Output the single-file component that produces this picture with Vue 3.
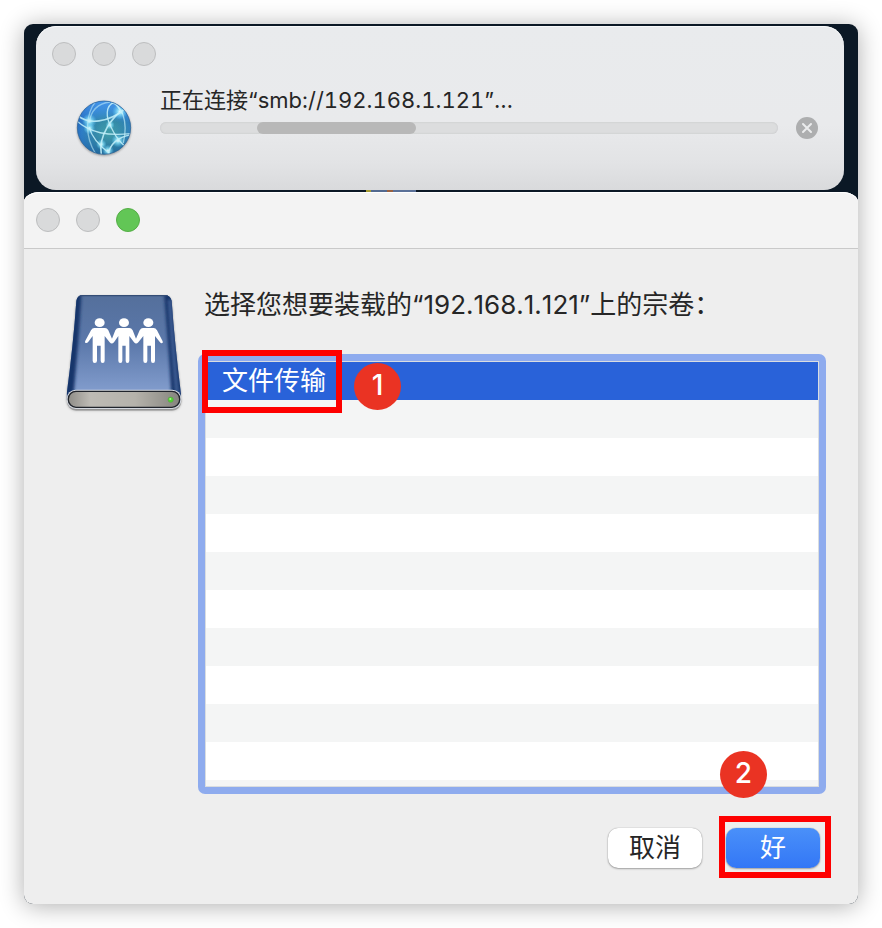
<script setup>
import { ref } from 'vue'

const server = '192.168.1.121'
const volumes = ['文件传输']
const selected = ref(0)

// Empty striped rows below the volumes
const emptyRows = 11

// Indeterminate bar position
const chunk = { marginLeft: '15.7%', width: '25.7%' }
</script>

<template>
  <main class="page">
    <div class="desktop">
      <section class="connect" aria-label="连接">
        <div class="lights">
          <button class="light" type="button" aria-label="关闭" disabled></button>
          <button class="light" type="button" aria-label="最小化" disabled></button>
          <button class="light" type="button" aria-label="缩放" disabled></button>
        </div>
        <div class="connect-body">
          <svg class="globe" viewBox="48 45 168 168" aria-hidden="true">
            <defs>
              <radialGradient id="sea" cx="0.58" cy="0.62" r="0.62">
                <stop offset="0" stop-color="#43a3a4" />
                <stop offset="0.45" stop-color="#3389a8" />
                <stop offset="0.8" stop-color="#2c7cc4" />
                <stop offset="1" stop-color="#2467bd" />
              </radialGradient>
              <linearGradient id="shine" x1="0" y1="0" x2="0" y2="1">
                <stop offset="0" stop-color="#4ba0f5" stop-opacity="0.8" />
                <stop offset="0.4" stop-color="#4ba0f5" stop-opacity="0" />
                <stop offset="1" stop-color="#0a3f70" stop-opacity="0.4" />
              </linearGradient>
              <radialGradient id="glow">
                <stop offset="0" stop-color="#fff" />
                <stop offset="0.3" stop-color="#9ff0ff" stop-opacity="0.8" />
                <stop offset="1" stop-color="#5fd0ff" stop-opacity="0" />
              </radialGradient>
              <clipPath id="disc"><circle cx="132" cy="128" r="80" /></clipPath>
            </defs>
            <circle cx="132" cy="128" r="80" fill="url(#sea)" />
            <circle cx="132" cy="128" r="80" fill="url(#shine)" />
            <g clip-path="url(#disc)">
              <g fill="url(#glow)">
                <circle cx="88" cy="108" r="22" />
                <circle cx="88" cy="130" r="18" />
                <circle cx="180" cy="80" r="24" />
                <circle cx="150" cy="120" r="14" />
                <circle cx="174" cy="167" r="20" />
                <circle cx="124" cy="178" r="16" />
                <circle cx="144" cy="197" r="18" />
              </g>
              <g fill="none" stroke="#c4f1fa" stroke-width="4" stroke-opacity="0.85">
                <path d="M54 92C85 120 145 112 192 74" stroke-width="5" />
                <path d="M48 106C90 145 145 153 214 146" />
                <path d="M108 48C78 85 72 150 106 205" stroke-opacity="0.55" />
                <path d="M88 112C92 82 110 56 150 51" stroke-opacity="0.55" />
                <path d="M88 128C96 160 120 184 150 206" />
                <path d="M186 78C160 94 114 150 124 208" stroke-width="5" />
                <path d="M162 52C135 62 139 98 151 122S168 158 194 184" />
                <path d="M154 52C184 62 206 105 190 174" stroke-opacity="0.65" />
                <path d="M214 149C174 156 150 174 144 210" stroke-width="5" />
                <path d="M162 52C177 62 176 74 188 86" />
              </g>
            </g>
            <circle cx="132" cy="128" r="80" fill="none" stroke="#245f96" stroke-width="2" />
          </svg>
          <div class="connect-main">
            <p id="status" class="status">正在连接“smb://{{ server }}”…</p>
            <div class="progress-row">
              <div class="track" role="progressbar" aria-labelledby="status">
                <div class="chunk" :style="chunk"></div>
              </div>
              <button class="stop" type="button" aria-label="停止">
                <svg viewBox="0 0 22 22" aria-hidden="true">
                  <path d="M7 7l8 8M15 7l-8 8" stroke="#ebeced" stroke-width="2" stroke-linecap="round" />
                </svg>
              </button>
            </div>
          </div>
        </div>
      </section>

      <div class="seam"></div>

      <section class="dialog" aria-labelledby="prompt">
        <header class="titlebar lights">
          <button class="light" type="button" aria-label="关闭" disabled></button>
          <button class="light" type="button" aria-label="最小化" disabled></button>
          <button class="light is-green" type="button" aria-label="缩放"></button>
        </header>
        <div class="dialog-body">
          <svg class="drive" viewBox="33 39 348 357" aria-hidden="true">
            <defs>
              <linearGradient id="top" x1="0" y1="0" x2="0" y2="1">
                <stop offset="0" stop-color="#546f9b" />
                <stop offset="0.45" stop-color="#5b78aa" />
                <stop offset="1" stop-color="#8ba5d5" />
              </linearGradient>
              <linearGradient id="metal" x1="0" y1="0" x2="1" y2="0">
                <stop offset="0" stop-color="#8f8d88" />
                <stop offset="0.2" stop-color="#bebbb5" />
                <stop offset="0.6" stop-color="#b5b2ab" />
                <stop offset="1" stop-color="#85847e" />
              </linearGradient>
              <filter id="soft" x="-50%" y="-10%" width="200%" height="120%">
                <feGaussianBlur stdDeviation="4" />
              </filter>
              <clipPath id="case">
                <path d="M84 45H328Q346 45 350 62C356 150 366 245 378 342V360H35V342C48 245 58 150 64 62Q67 45 84 45Z" />
              </clipPath>
            </defs>
            <rect x="36" y="336" width="343" height="56" rx="27" fill="#000" fill-opacity="0.2" />
            <g clip-path="url(#case)">
              <rect x="33" y="39" width="348" height="330" fill="url(#top)" />
              <!-- rounded edges of the case -->
              <g filter="url(#soft)">
                <path d="M60 30H80C74 150 64 250 54 370H20Z" fill="#19366a" />
                <path d="M326 30H360L390 370H350C344 250 336 150 326 30Z" fill="#17346a" />
                <path d="M344 60C350 160 358 250 367 350" fill="none" stroke="#42639b" stroke-width="8" />
              </g>
              <path d="M60 47H350" stroke="#344d76" stroke-width="4" />
            </g>
            <rect x="35" y="329" width="344" height="58" rx="27" fill="#d4d8df" />
            <rect x="40" y="334" width="334" height="48" rx="23" fill="url(#metal)" stroke="#20242c" stroke-width="4" />
            <circle cx="347" cy="359" r="8" fill="#4fd52f" stroke="#60994f" stroke-width="2" />
            <circle cx="346" cy="357" r="3" fill="#a6f88b" />
            <!-- three people holding hands -->
            <g fill="#fff">
              <ellipse cx="134" cy="128" rx="15" ry="13" />
              <ellipse cx="207" cy="128" rx="15" ry="13" />
              <ellipse cx="280" cy="128" rx="15" ry="13" />
              <path d="M118 144H150Q156 144 160 151L171 176L181 151Q185 144 191 144H223Q229 144 233 151L243 176L254 151Q258 144 264 144H296Q302 144 306 151L323 184Q325 190 320 190Q317 190 315 187L300 168V242Q300 249 294 249Q288 249 288 242V197H277V242Q277 249 271 249Q265 249 265 242V168L250 187Q243 194 237 187L223 168V242Q223 249 217 249Q212 249 212 242V197H202V242Q202 249 196 249Q190 249 190 242V168L177 187Q170 194 164 187L149 168V242Q149 249 143 249Q137 249 137 242V197H126V242Q126 249 119 249Q113 249 113 242V168L99 187Q96 190 92 189Q88 187 91 182L108 151Q112 144 118 144Z" />
            </g>
          </svg>

          <div class="picker">
            <p id="prompt" class="prompt">选择您想要装载的“{{ server }}”上的宗卷：</p>
            <div class="list-wrap">
              <ul class="list" role="listbox" aria-labelledby="prompt" tabindex="0">
                <li
                  v-for="(name, index) in volumes"
                  :key="name"
                  class="row"
                  :class="{ 'is-selected': selected === index }"
                  role="option"
                  :aria-selected="selected === index"
                  @click="selected = index"
                >
                  {{ name }}
                </li>
                <li v-for="n in emptyRows" :key="n" class="row" role="presentation"></li>
              </ul>
              <span class="frame frame-volume"></span>
              <span class="badge badge-volume">1</span>
            </div>
            <div class="actions">
              <button class="btn" type="button">取消</button>
              <div class="confirm">
                <button class="btn is-primary" type="button">好</button>
                <span class="frame frame-confirm"></span>
                <span class="badge badge-confirm">2</span>
              </div>
            </div>
          </div>
        </div>
      </section>
    </div>
  </main>
</template>

<style>
body {
  background: #fff;
}
</style>

<style scoped>
.page {
  padding: 24px;
  font-family: Inter, 'Noto Sans CJK SC', sans-serif;
  color: #262626;
}

.page * {
  box-sizing: border-box;
}

button {
  padding: 0;
  border: 0;
  font-family: inherit;
}

p,
ul {
  margin: 0;
}

.desktop {
  overflow: hidden;
  padding-top: 2px;
  border-radius: 9px;
  background: #0b1825;
  box-shadow: 0 2px 24px rgba(0, 0, 0, 0.32);
}

/* Connection window */
.connect {
  margin: 0 14px 0 12px;
  padding: 16px 26px 34px 16px;
  border-radius: 20px;
  background: linear-gradient(#e9ebed 0%, #e9eaec 60%, #e2e3e5 84%, #d9dadc 100%);
  box-shadow: inset 0 1px 0 #f8f9fa;
}

.lights {
  display: flex;
  gap: 16px;
}

.light {
  width: 24px;
  height: 24px;
  border: 1px solid #bdbebf;
  border-radius: 50%;
  background: #d9dadb;
}

.light.is-green {
  border-color: #55ae46;
  background: #62c656;
}

.connect-body {
  display: flex;
  gap: 28px;
  padding: 20px 0 0 24px;
}

.globe {
  flex: none;
  width: 56px;
  height: 56px;
  margin-top: 14px;
  filter: drop-shadow(0 1px 1px rgba(0, 0, 0, 0.35));
}

.connect-main {
  flex: 1;
}

.status {
  font-size: 22px;
  font-variant-numeric: tabular-nums;
  font-kerning: none;
  line-height: 28px;
}

.progress-row {
  display: flex;
  align-items: center;
  gap: 18px;
  padding-top: 3px;
}

.track {
  flex: 1;
  height: 12px;
  overflow: hidden;
  border-radius: 6px;
  background: #dcddde;
  box-shadow: inset 0 0 2px #bfc0c2;
}

.chunk {
  height: 12px;
  border-radius: 6px;
  background: #b8b8b8;
}

.stop {
  width: 22px;
  height: 22px;
  border-radius: 50%;
  background: #adaeaf;
}

.stop svg {
  display: block;
}

/* Sliver of desktop between both windows */
.seam {
  width: 50px;
  height: 2px;
  margin-left: 41%;
  background: linear-gradient(90deg, #a59b32 10%, #52698f 10% 42%, #98603f 42% 54%, #5a7097 54%);
}

/* Volume dialog */
.dialog {
  border-radius: 16px 16px 0 0 / 10px 10px 0 0;
  background: #eee;
}

.titlebar {
  padding: 16px 12px;
  border-bottom: 1px solid #c9c9c9;
  border-radius: 16px 16px 0 0 / 10px 10px 0 0;
  background: #f3f3f3;
  box-shadow: inset 0 1px 0 #fff;
}

.dialog-body {
  display: flex;
  gap: 16px;
  padding: 38px 32px 36px 42px;
}

.drive {
  flex: none;
  width: 116px;
  height: 119px;
  margin-top: 6px;
  filter: drop-shadow(0 1px 1px rgba(0, 0, 0, 0.3));
}

.picker {
  flex: 1;
}

.prompt {
  padding-left: 6px;
  font-size: 26px;
  font-kerning: none;
  line-height: 36px;
}

.list-wrap {
  position: relative;
  margin-top: 31px;
}

.list {
  padding: 7px;
  border-radius: 7px;
  background: #8eabee;
  list-style: none;
  outline: none;
}

.row {
  height: 38px;
  padding: 0 16px;
  border: solid #d9dde0;
  border-width: 0 1px;
  background: #fff;
  font-size: 26px;
  line-height: 38px;
}

.row:nth-child(even) {
  background: #f4f5f5;
}

.row:first-child {
  height: 39px;
  border-top-width: 1px;
}

/* The list ends partway through its last row */
.row:last-child {
  height: 7px;
  border-bottom-width: 1px;
}

.row.is-selected {
  background: #2962d9;
  color: #fff;
}

.actions {
  display: flex;
  justify-content: flex-end;
  gap: 24px;
  padding: 34px 6px 0 0;
}

.btn {
  display: block;
  width: 94px;
  height: 40px;
  border-radius: 10px;
  background: #fff;
  box-shadow:
    0 0 1px rgba(0, 0, 0, 0.4),
    0 1px 2px rgba(0, 0, 0, 0.3);
  color: #262626;
  font-size: 26px;
  line-height: 38px;
}

.btn.is-primary {
  background: linear-gradient(#4a90f9, #3377f6);
  color: #fff;
}

.confirm {
  position: relative;
}

/* Step markers */
.frame {
  position: absolute;
  border: 6px solid #fe0000;
  pointer-events: none;
}

.frame-volume {
  top: -4px;
  left: 4px;
  width: 140px;
  height: 63px;
}

.frame-confirm {
  top: -12px;
  right: -11px;
  bottom: -10px;
  left: -7px;
}

.badge {
  position: absolute;
  width: 47px;
  height: 47px;
  border-radius: 50%;
  background: #ea3323;
  color: #fff;
  font-size: 28px;
  font-weight: 500;
  line-height: 44px;
  text-align: center;
}

.badge-volume {
  top: 9px;
  left: 156px;
}

.badge-confirm {
  top: -77px;
  left: -6px;
}
</style>
